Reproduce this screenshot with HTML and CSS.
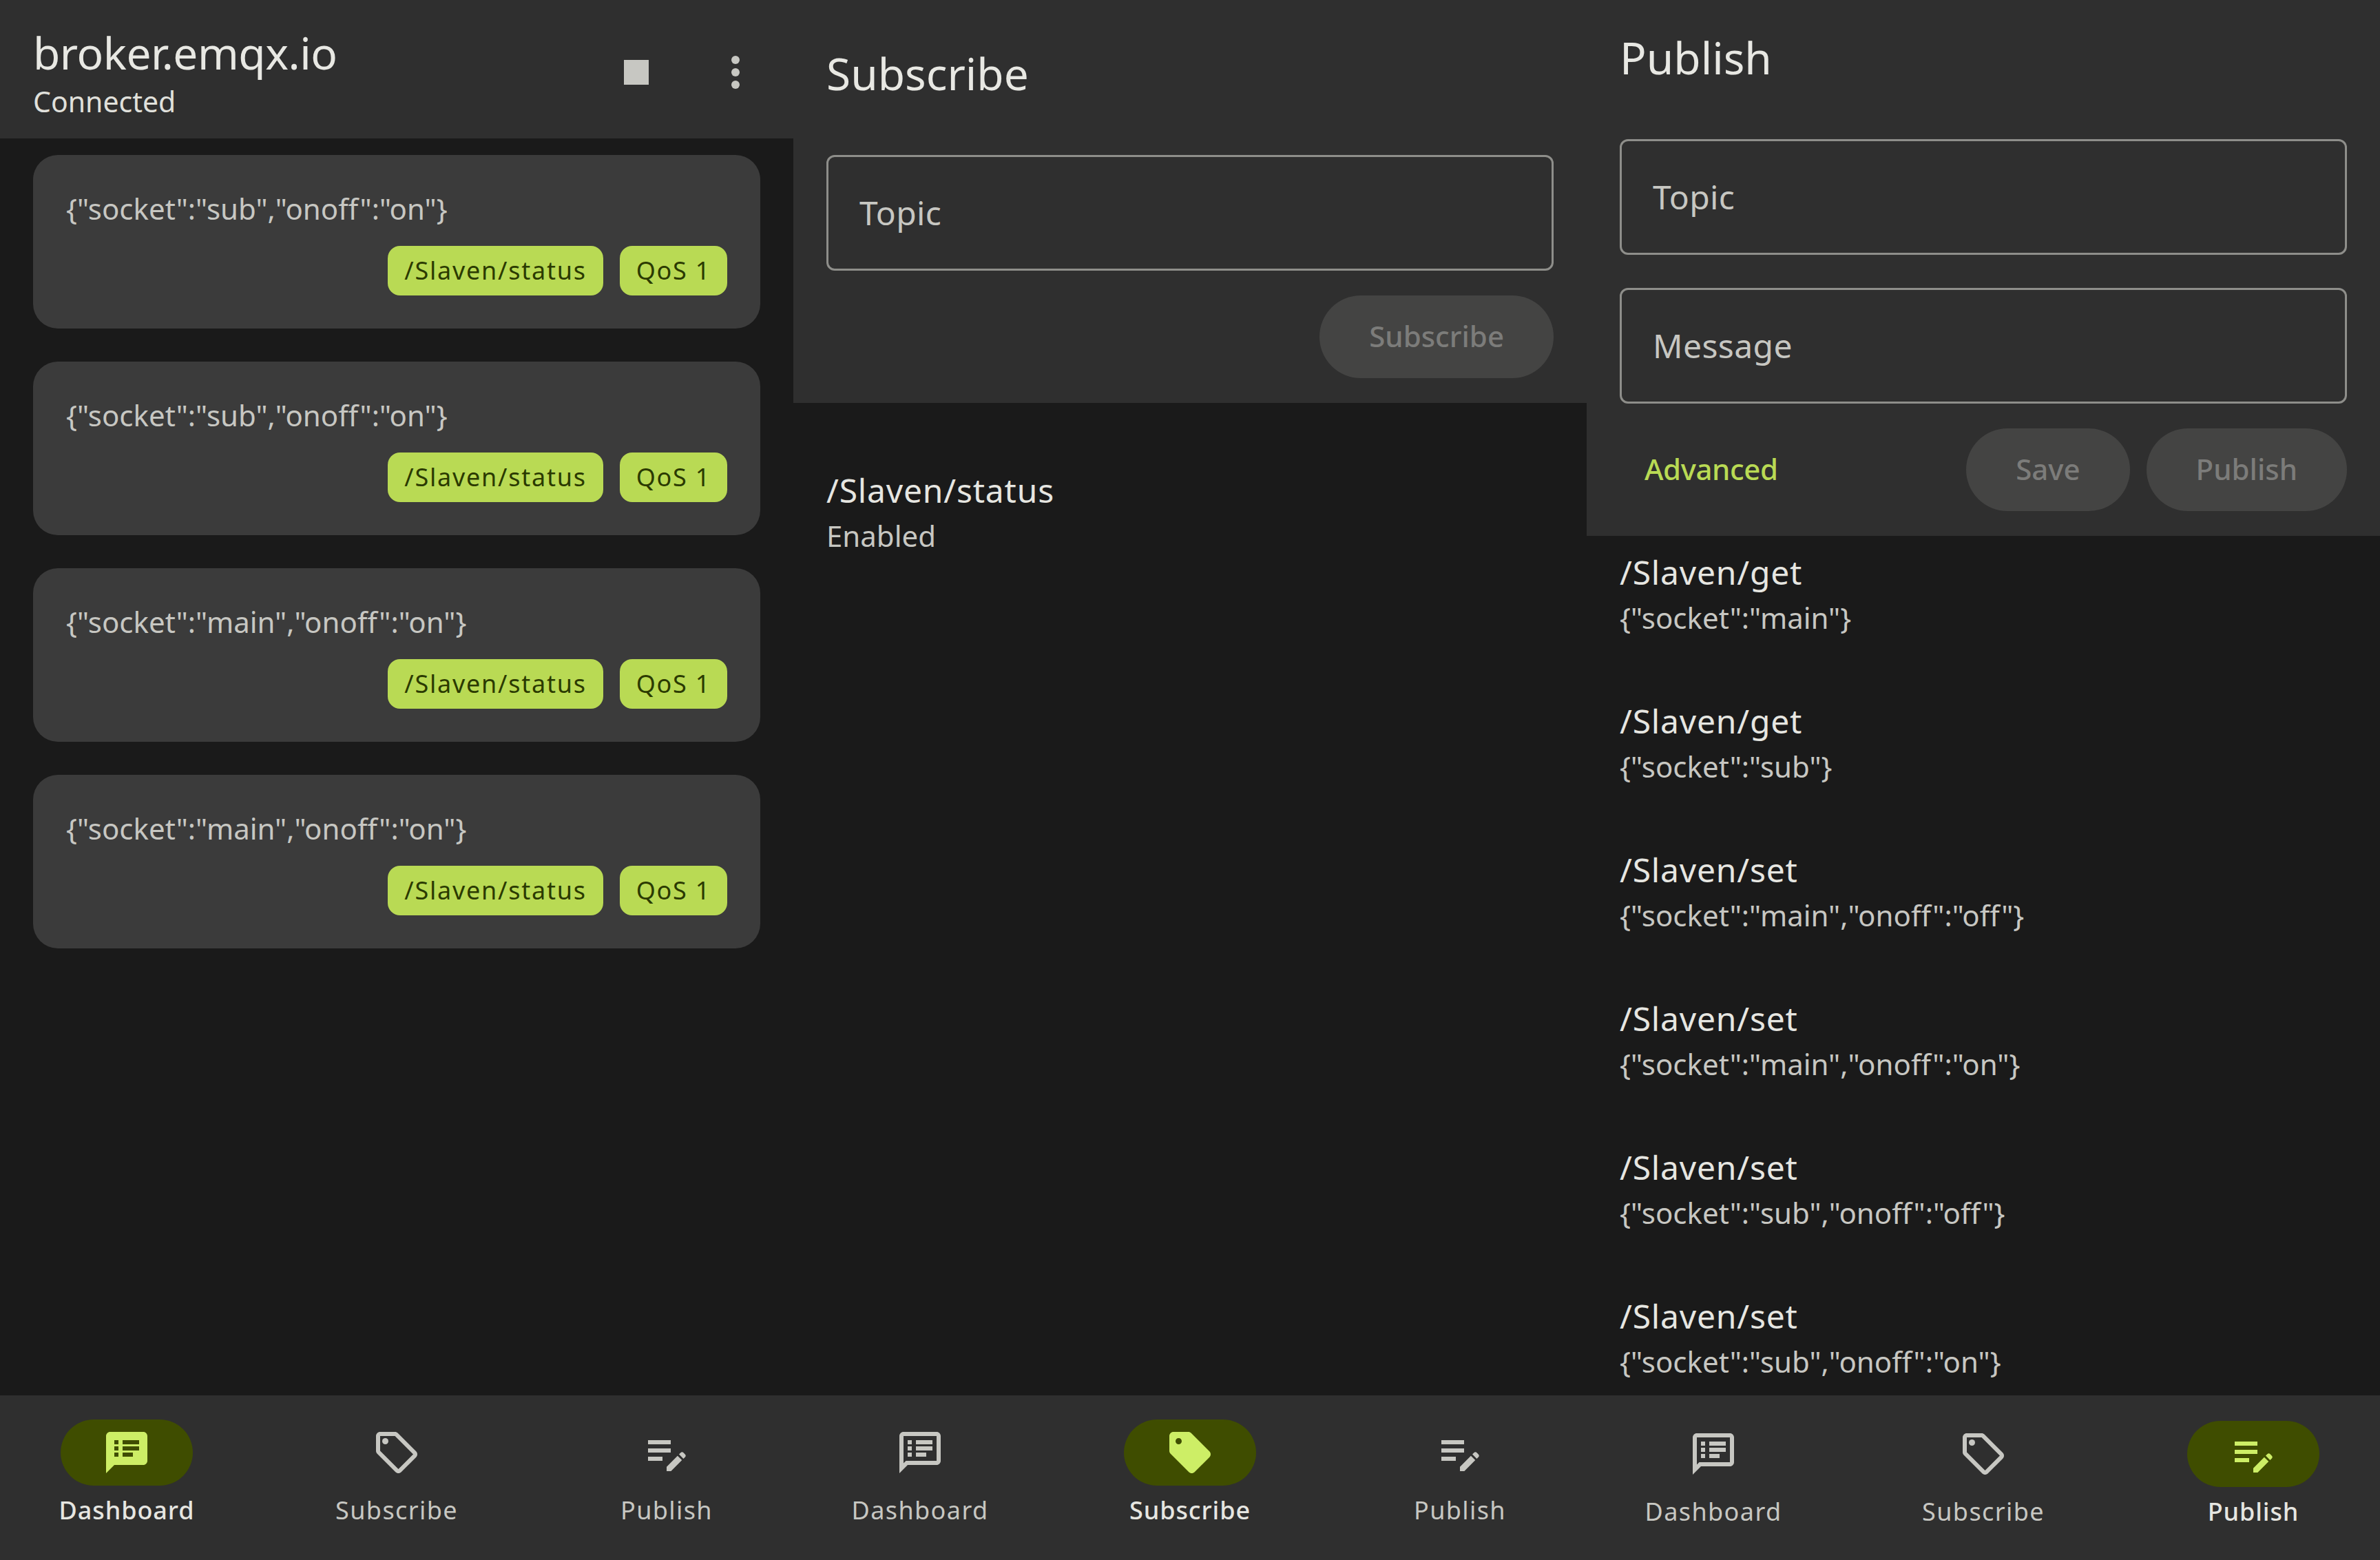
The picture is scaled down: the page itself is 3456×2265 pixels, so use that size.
FILE: index.html
```html
<!DOCTYPE html>
<html lang="en">
<head>
<meta charset="utf-8">
<title>MQTT client</title>
<link rel="stylesheet" href="styles.css">
</head>
<body>
<svg class="defs" width="0" height="0" aria-hidden="true">
  <defs>
    <path id="lines" d="M6 6h2v2H6zM10 6h8v2h-8zM6 9h2v2H6zM10 9h8v2h-8zM6 12h2v2H6zM10 12h5v2h-5z"/>
    <symbol id="i-dash" viewBox="0 0 24 24"><path d="M20 2H4c-1.1 0-2 .9-2 2v18l4-4h14c1.1 0 2-.9 2-2V4c0-1.1-.9-2-2-2zm0 14H5.17L4 17.17V4h16v12z"/><use href="#lines"/></symbol>
    <symbol id="i-dash-on" viewBox="0 0 24 24"><path fill-rule="evenodd" d="M20 2H4c-1.1 0-2 .9-2 2v18l4-4h14c1.1 0 2-.9 2-2V4c0-1.1-.9-2-2-2zM6 6h2v2H6zM10 6h8v2h-8zM6 9h2v2H6zM10 9h8v2h-8zM6 12h2v2H6zM10 12h5v2h-5z"/></symbol>
    <symbol id="i-tag" viewBox="0 0 24 24"><path d="M21.41 11.41l-8.83-8.83C12.21 2.21 11.7 2 11.17 2H4C2.9 2 2 2.9 2 4v7.17c0 .53.21 1.04.59 1.41l8.83 8.83c.78.78 2.05.78 2.83 0l7.17-7.17c.78-.78.78-2.04-.01-2.83zM12.83 20L4 11.17V4h7.17L20 12.83 12.83 20z"/><circle cx="6.5" cy="6.5" r="1.5"/></symbol>
    <symbol id="i-tag-on" viewBox="0 0 24 24"><path d="M21.41 11.41l-8.83-8.83C12.21 2.21 11.7 2 11.17 2H4C2.9 2 2 2.9 2 4v7.17c0 .53.21 1.04.59 1.41l8.83 8.83c.78.78 2.05.78 2.83 0l7.17-7.17c.78-.78.78-2.04-.01-2.83zM6.5 8C5.67 8 5 7.33 5 6.5S5.67 5 6.5 5 8 5.67 8 6.5 7.33 8 6.5 8z"/></symbol>
    <symbol id="i-pub" viewBox="0 0 24 24"><path d="M3 10h11v2H3zM3 6h11v2H3zM3 14h7v2H3zM12 18.88V21h2.12l5.3-5.3-2.12-2.12zM20.13 14.99l.76-.76a1 1 0 0 0 0-1.41l-.71-.71a1 1 0 0 0-1.41 0l-.76.76z"/></symbol>
  </defs>
</svg>
<main class="panes">

  <section class="pane">
    <header class="bar bar-conn">
      <div class="conn">
        <h1 class="title title-conn">broker.emqx.io</h1>
        <p class="status">Connected</p>
      </div>
      <div class="actions">
        <button class="icon-btn"><svg class="icon" viewBox="0 0 24 24"><path d="M6 6h12v12H6z"/></svg></button>
        <button class="icon-btn"><svg class="icon" viewBox="0 0 24 24"><circle cx="12" cy="6" r="2"/><circle cx="12" cy="12" r="2"/><circle cx="12" cy="18" r="2"/></svg></button>
      </div>
    </header>
    <div class="body cards">
      <article class="card"><p class="payload">{"socket":"sub","onoff":"on"}</p><div class="chips"><span class="chip chip-topic">/Slaven/status</span><span class="chip chip-qos">QoS 1</span></div></article>
      <article class="card"><p class="payload">{"socket":"sub","onoff":"on"}</p><div class="chips"><span class="chip chip-topic">/Slaven/status</span><span class="chip chip-qos">QoS 1</span></div></article>
      <article class="card"><p class="payload">{"socket":"main","onoff":"on"}</p><div class="chips"><span class="chip chip-topic">/Slaven/status</span><span class="chip chip-qos">QoS 1</span></div></article>
      <article class="card"><p class="payload">{"socket":"main","onoff":"on"}</p><div class="chips"><span class="chip chip-topic">/Slaven/status</span><span class="chip chip-qos">QoS 1</span></div></article>
    </div>
    <nav class="nav">
      <a class="tab active"><span class="pill"><svg class="icon"><use href="#i-dash-on"/></svg></span><span class="label">Dashboard</span></a>
      <a class="tab"><span class="pill"><svg class="icon"><use href="#i-tag"/></svg></span><span class="label">Subscribe</span></a>
      <a class="tab"><span class="pill"><svg class="icon"><use href="#i-pub"/></svg></span><span class="label">Publish</span></a>
    </nav>
  </section>

  <section class="pane">
    <header class="bar bar-sub">
      <h2 class="title">Subscribe</h2>
      <div class="field">Topic</div>
      <div class="row row-end"><button class="btn">Subscribe</button></div>
    </header>
    <div class="body list list-sub">
      <div class="item"><p class="item-title">/Slaven/status</p><p class="item-sub">Enabled</p></div>
    </div>
    <nav class="nav">
      <a class="tab"><span class="pill"><svg class="icon"><use href="#i-dash"/></svg></span><span class="label">Dashboard</span></a>
      <a class="tab active"><span class="pill"><svg class="icon"><use href="#i-tag-on"/></svg></span><span class="label">Subscribe</span></a>
      <a class="tab"><span class="pill"><svg class="icon"><use href="#i-pub"/></svg></span><span class="label">Publish</span></a>
    </nav>
  </section>

  <section class="pane">
    <header class="bar bar-pub">
      <h2 class="title">Publish</h2>
      <div class="field">Topic</div>
      <div class="field">Message</div>
      <div class="row"><button class="text-btn">Advanced</button><button class="btn">Save</button><button class="btn">Publish</button></div>
    </header>
    <div class="body list list-pub">
      <div class="item"><p class="item-title">/Slaven/get</p><p class="item-sub">{"socket":"main"}</p></div>
      <div class="item"><p class="item-title">/Slaven/get</p><p class="item-sub">{"socket":"sub"}</p></div>
      <div class="item"><p class="item-title">/Slaven/set</p><p class="item-sub">{"socket":"main","onoff":"off"}</p></div>
      <div class="item"><p class="item-title">/Slaven/set</p><p class="item-sub">{"socket":"main","onoff":"on"}</p></div>
      <div class="item"><p class="item-title">/Slaven/set</p><p class="item-sub">{"socket":"sub","onoff":"off"}</p></div>
      <div class="item"><p class="item-title">/Slaven/set</p><p class="item-sub">{"socket":"sub","onoff":"on"}</p></div>
    </div>
    <nav class="nav nav-low">
      <a class="tab"><span class="pill"><svg class="icon"><use href="#i-dash"/></svg></span><span class="label">Dashboard</span></a>
      <a class="tab"><span class="pill"><svg class="icon"><use href="#i-tag"/></svg></span><span class="label">Subscribe</span></a>
      <a class="tab active"><span class="pill"><svg class="icon"><use href="#i-pub"/></svg></span><span class="label">Publish</span></a>
    </nav>
  </section>

</main>
</body>
</html>
```

FILE: styles.css
```css
* { box-sizing: border-box; }

html, body {
  margin: 0;
  height: 100%;
  overflow: hidden;
  background: #1a1a1a;
  color: #e6e6e1;
  font-family: "Noto Sans", "Open Sans", sans-serif;
}

h1, h2, p { margin: 0; font-weight: 400; }
button { font: inherit; border: 0; padding: 0; background: none; color: inherit; }

.defs { position: absolute; }

.panes {
  display: grid;
  grid-template-columns: repeat(3, 1152px);
  height: 2265px;
}

.pane {
  display: flex;
  flex-direction: column;
  height: 2265px;
  overflow: hidden;
}

.bar {
  position: relative;
  z-index: 1;
  flex: none;
  background: #2f2f2f;
}

.title {
  font-size: 64px;
  line-height: 84px;
  color: #e8e8e3;
}

.title-conn { letter-spacing: -0.5px; }

.bar-conn {
  display: flex;
  justify-content: space-between;
  height: 201px;
  padding-left: 48px;
  padding-right: 12px;
}

.conn { padding-top: 35px; }

.status {
  margin-top: -2px;
  font-size: 41px;
  line-height: 60px;
  color: #e0e0db;
}

.actions {
  display: flex;
  padding-top: 33px;
}

.icon-btn {
  display: flex;
  align-items: center;
  justify-content: center;
  width: 144px;
  height: 144px;
}

.icon {
  display: block;
  width: 72px;
  height: 72px;
  fill: #c7c7c2;
}

.body {
  flex: 1;
  min-height: 0;
  overflow: hidden;
}

.cards {
  display: flex;
  flex-direction: column;
  gap: 48px;
  padding: 24px 48px;
}

.card {
  display: flex;
  flex-direction: column;
  gap: 24px;
  padding: 48px;
  border-radius: 36px;
  background: #3b3b3b;
}

.payload {
  font-size: 42px;
  line-height: 60px;
  color: #c7c7c2;
}

.chips {
  display: flex;
  justify-content: flex-end;
  gap: 24px;
}

.chip {
  height: 72px;
  padding: 0 24px;
  border-radius: 18px;
  background: #b9da54;
  color: #2b3a00;
  font-size: 36px;
  line-height: 72px;
  letter-spacing: 1.75px;
}

.bar-sub {
  display: flex;
  flex-direction: column;
  height: 585px;
  padding: 65px 48px 36px;
}

.bar-pub {
  display: flex;
  flex-direction: column;
  height: 778px;
  padding: 42px 48px 36px;
}

.field {
  flex: none;
  height: 168px;
  margin-top: 48px;
  padding: 0 45px;
  border: 3px solid #8e8e8a;
  border-radius: 12px;
  font-size: 48px;
  line-height: 162px;
  letter-spacing: 0.4px;
  color: #c7c7c2;
}

.title + .field { margin-top: 76px; }

.row {
  display: flex;
  align-items: center;
  gap: 24px;
  margin-top: 36px;
}

.row-end { justify-content: flex-end; }

.btn {
  height: 120px;
  padding: 0 72px 3px;
  border-radius: 60px;
  background: #444443;
  color: #7c7c7a;
  font-size: 42px;
  font-weight: 500;
}

.text-btn {
  height: 120px;
  margin-right: auto;
  padding: 0 36px 3px;
  color: #b9da54;
  font-size: 42px;
  font-weight: 500;
  letter-spacing: -0.4px;
}

.list { padding: 0 48px; }
.list-sub { padding-top: 53px; }
.list-pub { margin-top: -21px; }

.item {
  display: flex;
  flex-direction: column;
  justify-content: center;
  height: 216px;
  padding-bottom: 9px;
}

.item-title {
  font-size: 48px;
  line-height: 72px;
  letter-spacing: 0.8px;
  color: #e6e6e1;
}

.item-sub {
  font-size: 42px;
  line-height: 60px;
  color: #c7c7c2;
}

.nav {
  position: relative;
  z-index: 1;
  flex: none;
  display: grid;
  grid-template-columns: repeat(3, 368px);
  gap: 24px;
  height: 239px;
  padding-top: 35px;
  background: #2f2f2f;
}

.nav-low { padding-top: 37px; }

.tab {
  display: flex;
  flex-direction: column;
  align-items: center;
  gap: 12px;
  color: #c7c7c2;
}

.pill {
  display: flex;
  align-items: center;
  justify-content: center;
  width: 192px;
  height: 96px;
  border-radius: 48px;
}

.label {
  font-size: 36px;
  line-height: 48px;
  letter-spacing: 1.4px;
}

.active { color: #e6e6e1; }
.active .label { font-weight: 500; letter-spacing: 0.9px; }
.active .pill { background: #3f4d00; }
.active .icon { fill: #cdee66; }
```
